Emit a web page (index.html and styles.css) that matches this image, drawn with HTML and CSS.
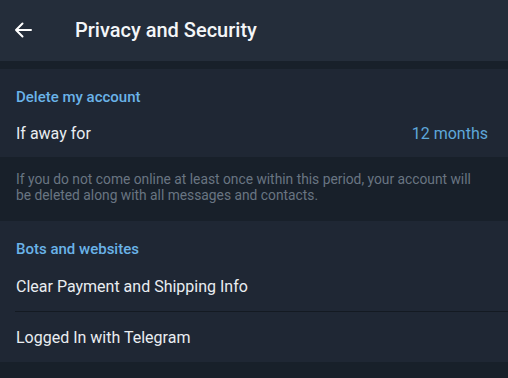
FILE: index.html
```html
<!DOCTYPE html>
<html>
<head>
<meta charset="utf-8">
<link rel="stylesheet" href="styles.css">
</head>
<body>
<div class="app">
  <header class="topbar">
    <svg class="back" width="18" height="16" viewBox="0 0 18 16"><path d="M17 8H2M8.5 1.5L2 8l6.5 6.5" fill="none" stroke="#fff" stroke-width="2" stroke-linecap="round" stroke-linejoin="round"/></svg>
    <h1 class="title">Privacy and Security</h1>
  </header>
  <div class="gap"></div>
  <section class="section">
    <div class="section-head">Delete my account</div>
    <div class="row row-first"><span>If away for</span><span class="value">12 months</span></div>
  </section>
  <div class="note">If you do not come online at least once within this period, your account will be deleted along with all messages and contacts.</div>
  <section class="section">
    <div class="section-head">Bots and websites</div>
    <div class="row divided">Clear Payment and Shipping Info</div>
    <div class="row">Logged In with Telegram</div>
  </section>
  <div class="note">Websites where you've used Telegram to log in.</div>
</div>
</body>
</html>
```
FILE: styles.css
```css
html, body { margin: 0; padding: 0; }
body { background: #18202a; font-family: Roboto, "Noto Sans", sans-serif; overflow: hidden; }
.app { width: 508px; }
.topbar { height: 61px; background: #242d3a; display: flex; align-items: center; }
.back { margin-left: 14px; margin-top: -2px; }
.title { margin: 0 0 0 43px; font-size: 20px; font-weight: 500; color: #f4f6f8; margin-top: -2px; }
.gap { height: 8px; background: #18202a; }
.section { background: #1f2734; }
.section-head { padding: 20px 16px 0; height: 20px; line-height: 16px; font-size: 15px; font-weight: 500; color: #6ab3e8; }
.row { height: 50px; display: flex; align-items: center; justify-content: space-between; padding: 0 20px 0 16px; font-size: 16px; color: #e9edf1; }
.row-first { height: 47px; padding-top: 1px; }
.divided { border-bottom: 1px solid #141a22; height: 49px; padding-top: 1px; margin-left: 15px; padding-left: 1px; }
.value { color: #5ea8da; }
.note { background: #18202a; padding: 14px 24px 18px 16px; font-size: 13.8px; line-height: 16px; color: #697582; }
```
